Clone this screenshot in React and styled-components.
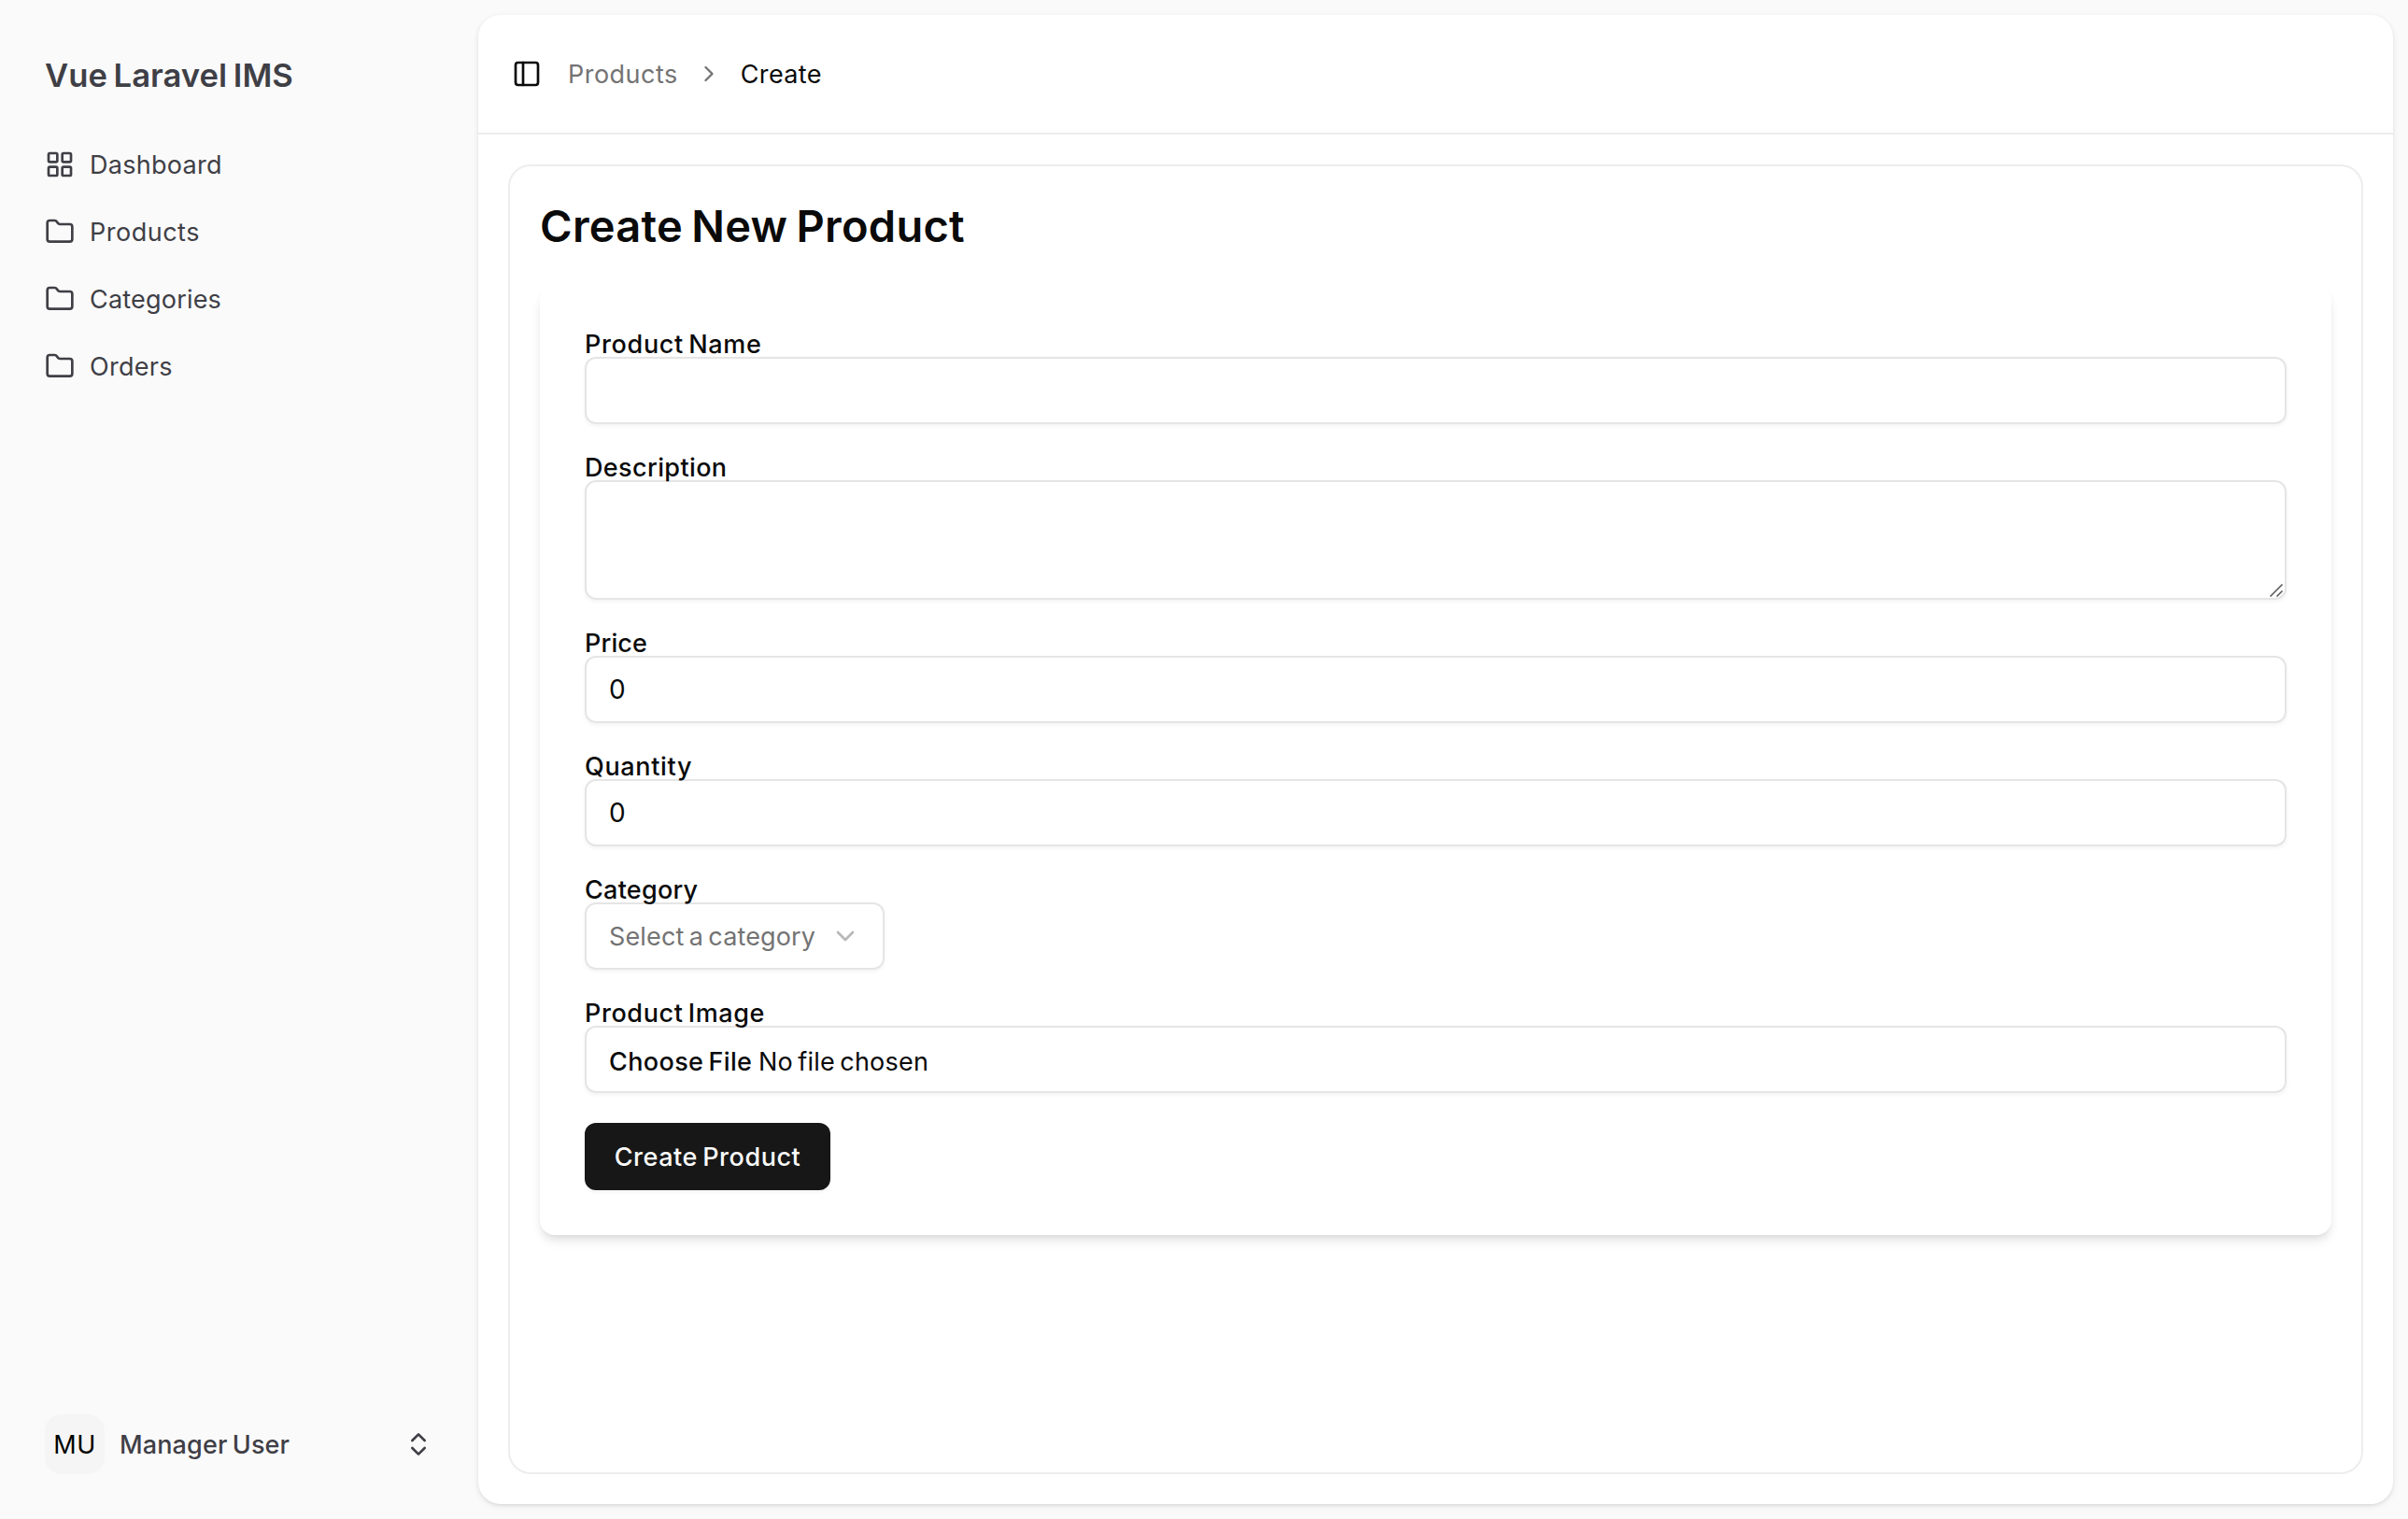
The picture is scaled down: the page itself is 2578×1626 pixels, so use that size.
import React from "react";
import styled, { createGlobalStyle } from "styled-components";
import {
  LayoutGrid,
  Folder,
  PanelLeft,
  ChevronRight,
  ChevronDown,
  ChevronsUpDown,
} from "lucide-react";

const GlobalStyle = createGlobalStyle`
  *, *::before, *::after { box-sizing: border-box; }
  body {
    margin: 0;
    background: #fafafa;
    color: #0a0a0a;
    font-family: Inter, "Liberation Sans", sans-serif;
    font-size: 27px;
    font-weight: 400;
    line-height: 40px;
    -webkit-font-smoothing: antialiased;
  }
  svg { flex-shrink: 0; display: block; }
`;

const Layout = styled.div`
  display: flex;
  width: 100%;
  height: 100vh;
  overflow: hidden;
`;

const Text = styled.span`
  display: inline-block;
  padding-top: ${(p) => p.$drop ?? 1}px;
  margin-bottom: ${(p) => -(p.$drop ?? 1)}px;
  white-space: nowrap;
  letter-spacing: ${(p) => p.$track || 0}px;
  word-spacing: ${(p) => p.$gap || 0}px;
`;

/* Sidebar */
const Sidebar = styled.aside`
  flex: 0 0 512px;
  display: flex;
  flex-direction: column;
  padding: 32px;
  color: #3f3f46;
`;

const Brand = styled.div`
  height: 96px;
  padding: 0 16px;
  display: flex;
  align-items: center;
  font-size: 34.6px;
  font-weight: 600;
`;

const Nav = styled.nav`
  margin-top: 16px;
  display: flex;
  flex-direction: column;
  gap: 8px;
`;

const NavItem = styled.a`
  height: 64px;
  padding: 0 16px;
  display: flex;
  align-items: center;
  gap: 16px;
`;

const UserMenu = styled.div`
  margin-top: auto;
  height: 96px;
  padding: 0 16px;
  display: flex;
  align-items: center;
`;

const Avatar = styled.div`
  width: 64px;
  height: 64px;
  border-radius: 18px;
  background: #f5f5f5;
  color: #000;
  display: flex;
  align-items: center;
  justify-content: center;
`;

const UserName = styled.div`
  flex: 1;
  margin-left: 16px;
  font-weight: 500;
`;

/* Main panel */
const Panel = styled.main`
  flex: 1;
  margin: 16px 16px 16px 0;
  display: flex;
  flex-direction: column;
  background: #fff;
  border-radius: 24px;
  box-shadow: 0 2px 6px rgba(0, 0, 0, 0.1), 0 2px 4px -2px rgba(0, 0, 0, 0.1);
`;

const Header = styled.header`
  height: 128px;
  padding: 0 36px;
  display: flex;
  align-items: center;
  border-bottom: 2px solid #ededed;
`;

const Crumbs = styled.nav`
  margin-left: 28px;
  display: flex;
  align-items: center;
  gap: 19.5px;
  color: #737373;
`;

const Current = styled.span`
  color: #0a0a0a;
`;

const Content = styled.section`
  flex: 1;
  margin: 32px;
  padding: 32px;
  border: 2px solid #ededed;
  border-radius: 24px;
`;

const Title = styled.h1`
  height: 64px;
  margin: 0 0 32px;
  font-size: 47px;
  line-height: 64px;
  font-weight: 600;
`;

const Card = styled.form`
  padding: 48px;
  display: flex;
  flex-direction: column;
  align-items: stretch;
  gap: 32px;
  background: #fff;
  border-radius: 16px;
  box-shadow: 0 8px 12px -2px rgba(0, 0, 0, 0.1), 0 4px 8px -4px rgba(0, 0, 0, 0.1);
`;

const Field = styled.div`
  display: flex;
  flex-direction: column;
  align-items: flex-start;
`;

const Label = styled.label`
  position: relative;
  z-index: 1;
  height: 28px;
  line-height: 28px;
  font-weight: 500;
`;

const control = `
  border: 2px solid #e5e5e5;
  border-radius: 12px;
  background: transparent;
  box-shadow: 0 2px 4px rgba(0, 0, 0, 0.05);
  font: inherit;
  color: inherit;
  outline: none;
`;

const Input = styled.input`
  ${control}
  width: 100%;
  height: 72px;
  padding: 0 24px;
  font-size: 28px;
`;

const AreaWrap = styled.div`
  position: relative;
  width: 100%;
  height: 128px;
`;

const Area = styled.textarea`
  ${control}
  display: block;
  width: 100%;
  height: 128px;
  padding: 16px 24px;
  resize: none;
`;

const Grip = styled.svg`
  position: absolute;
  right: 3px;
  bottom: 2px;
`;

const Select = styled.button`
  ${control}
  width: 321px;
  height: 72px;
  padding: 0 24px;
  display: flex;
  align-items: center;
  justify-content: space-between;
  color: #737373;
`;

const FilePicker = styled.div`
  ${control}
  width: 100%;
  height: 72px;
  padding: 4px 24px 0;
  display: flex;
  align-items: center;
  gap: 6px;
`;

const FileButton = styled.span`
  width: 154px;
  font-weight: 500;
`;

const Submit = styled.button`
  align-self: flex-start;
  width: 263px;
  height: 72px;
  padding: 0;
  border: 0;
  border-radius: 12px;
  background: #171717;
  color: #fafafa;
  font: inherit;
  font-weight: 500;
  box-shadow: 0 2px 4px rgba(0, 0, 0, 0.05);
`;

const navItems = [
  { label: "Dashboard", icon: LayoutGrid, track: 0.28 },
  { label: "Products", icon: Folder, track: 0.5 },
  { label: "Categories", icon: Folder, track: 0.2 },
  { label: "Orders", icon: Folder, track: 0.3 },
];

export default function App() {
  return (
    <Layout>
      <GlobalStyle />
      <Sidebar>
        <Brand>
          <Text $drop={0} $track={0.03} $gap={-2}>Vue Laravel IMS</Text>
        </Brand>
        <Nav>
          {navItems.map(({ label, icon: Icon, track }) => (
            <NavItem key={label}>
              <Icon size={32} />
              <Text $track={track}>{label}</Text>
            </NavItem>
          ))}
        </Nav>
        <UserMenu>
          <Avatar>
            <Text $track={0.6}>MU</Text>
          </Avatar>
          <UserName>
            <Text $track={0.13} $gap={-2}>Manager User</Text>
          </UserName>
          <ChevronsUpDown size={32} />
        </UserMenu>
      </Sidebar>

      <Panel>
        <Header>
          <PanelLeft size={32} />
          <Crumbs>
            <Text $track={0.48}>Products</Text>
            <ChevronRight size={28} />
            <Current>
              <Text $track={0.38}>Create</Text>
            </Current>
          </Crumbs>
        </Header>

        <Content>
          <Title>
            <Text $drop={0} $track={0.28} $gap={-3}>Create New Product</Text>
          </Title>

          <Card>
            <Field>
              <Label>
                <Text $track={0.66} $gap={-2.5}>Product Name</Text>
              </Label>
              <Input type="text" />
            </Field>

            <Field>
              <Label>
                <Text $track={0.38}>Description</Text>
              </Label>
              <AreaWrap>
                <Area />
                <Grip width="16" height="16" viewBox="0 0 16 16" fill="none" stroke="#555" strokeWidth="1.5">
                  <path d="M1.5 14.5 14.5 1.5M8.5 14.5 14.5 8.5" />
                </Grip>
              </AreaWrap>
            </Field>

            <Field>
              <Label>
                <Text $track={0.15}>Price</Text>
              </Label>
              <Input type="text" defaultValue="0" />
            </Field>

            <Field>
              <Label>
                <Text $track={0.66}>Quantity</Text>
              </Label>
              <Input type="text" defaultValue="0" />
            </Field>

            <Field>
              <Label>
                <Text $track={0.25}>Category</Text>
              </Label>
              <Select type="button">
                <Text $track={0.15} $gap={-2.5}>Select a category</Text>
                <ChevronDown size={32} opacity={0.5} />
              </Select>
            </Field>

            <Field>
              <Label>
                <Text $track={0.6} $gap={-2.5}>Product Image</Text>
              </Label>
              <FilePicker>
                <FileButton>
                  <Text $track={0.38} $gap={-2.5}>Choose File</Text>
                </FileButton>
                <Text $track={0.22} $gap={-2.5}>No file chosen</Text>
              </FilePicker>
            </Field>

            <Submit type="button">
              <Text $track={0.55} $gap={-2.5}>Create Product</Text>
            </Submit>
          </Card>
        </Content>
      </Panel>
    </Layout>
  );
}
